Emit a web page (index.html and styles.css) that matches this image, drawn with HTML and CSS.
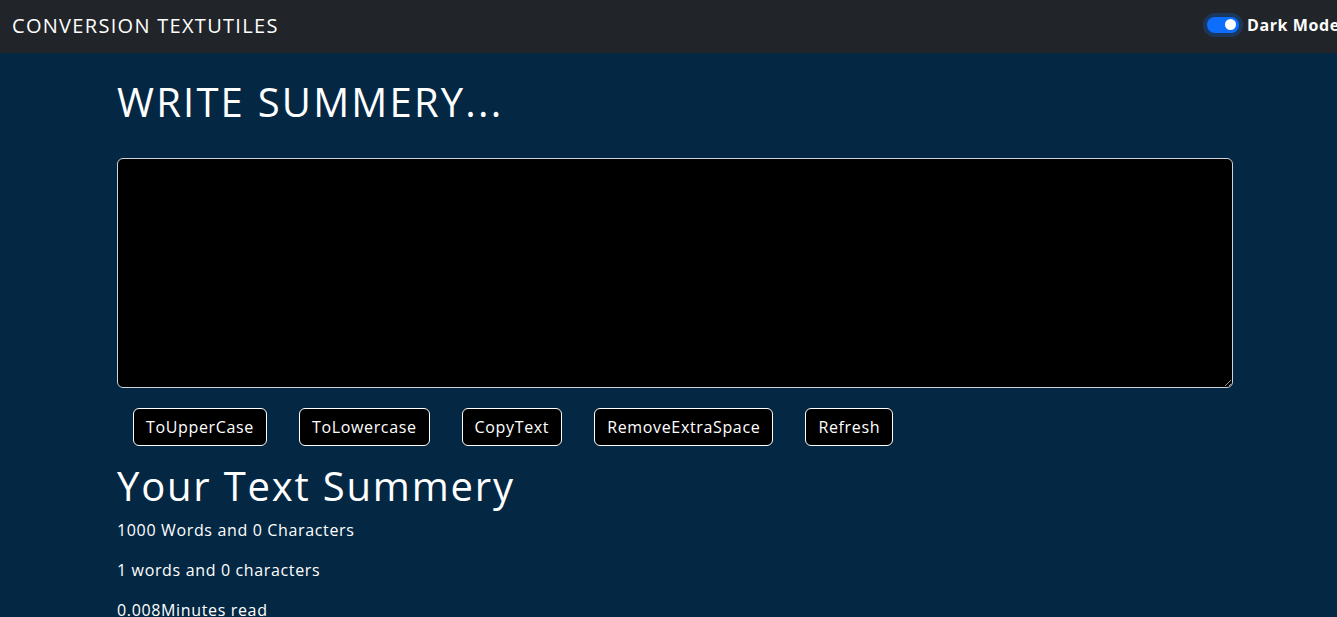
FILE: index.html
```html
<!DOCTYPE html>
<html lang="en">
<head>
<meta charset="utf-8">
<title>TextUtils</title>
<link rel="stylesheet" href="styles.css">
</head>
<body>
<nav class="navbar">
  <a class="brand" href="#">CONVERSION TEXTUTILES</a>
  <div class="switch">
    <span class="switch-track"><span class="switch-knob"></span></span>
    <label class="switch-label">Dark Mode</label>
  </div>
</nav>
<main class="container">
  <h1 class="title">WRITE SUMMERY...</h1>
  <textarea class="textbox" rows="8"></textarea>
  <div class="actions">
    <button class="btn">ToUpperCase</button>
    <button class="btn">ToLowercase</button>
    <button class="btn">CopyText</button>
    <button class="btn">RemoveExtraSpace</button>
    <button class="btn">Refresh</button>
  </div>
  <h1 class="summary-title">Your Text Summery</h1>
  <p class="stat">1000 Words and 0 Characters</p>
  <p class="stat">1 words and 0 characters</p>
  <p class="stat">0.008Minutes read</p>
</main>
</body>
</html>
```

FILE: styles.css
```css
* { box-sizing: border-box; }
html, body {
  margin: 0;
  padding: 0;
}
body {
  background: #042743;
  color: #fff;
  font-family: "Open Sans", "Noto Sans", sans-serif;
  font-size: 16px;
  line-height: 1.5;
  overflow: hidden;
}
.navbar {
  height: 53px;
  background: #212529;
  display: flex;
  align-items: center;
  justify-content: space-between;
  padding: 0 0 0 12px;
}
.brand {
  color: #fff;
  text-decoration: none;
  font-size: 20px;
  font-weight: 500;
  line-height: 30px;
  letter-spacing: 1.3px;
  margin-top: -2px;
}
.switch {
  display: flex;
  align-items: center;
  gap: 9px;
  width: 130px;
  margin-top: -4px;
}
.switch-track {
  flex: none;
  width: 32px;
  height: 16px;
  border-radius: 8px;
  background: #0d6efd;
  box-shadow: 0 0 0 4px rgba(13, 110, 253, 0.25);
  display: flex;
  align-items: center;
  justify-content: flex-end;
  padding-right: 3px;
}
.switch-knob {
  width: 11px;
  height: 11px;
  border-radius: 50%;
  background: #fff;
}
.switch-label {
  font-weight: 700;
  font-size: 16px;
  white-space: nowrap;
  letter-spacing: 0.6px;
  margin-left: -1px;
}
.container {
  width: 1116px;
  margin-left: 117px;
  display: flex;
  flex-direction: column;
  align-items: flex-start;
}
.title {
  font-size: 40px;
  font-weight: 400;
  line-height: 48px;
  margin: 25px 0 32px;
  letter-spacing: 2.2px;
}
.textbox {
  width: 100%;
  height: 230px;
  background: #000;
  color: #fff;
  border: 1px solid #ced4da;
  border-radius: 6px;
  padding: 6px 12px;
  font: inherit;
  resize: vertical;
}
.actions {
  display: flex;
  gap: 32px;
  margin: 20px 0 0 16px;
}
.btn {
  background: #000;
  color: #fff;
  border: 1px solid #fff;
  border-radius: 6px;
  font: inherit;
  font-size: 16px;
  font-weight: 500;
  height: 38px;
  padding: 0 12px;
  letter-spacing: 0.65px;
}
.summary-title {
  font-size: 40px;
  font-weight: 400;
  line-height: 48px;
  margin: 16px 0 8px;
  letter-spacing: 1.8px;
}
.stat {
  margin: 0 0 16px;
  font-size: 16px;
  font-weight: 500;
  line-height: 24px;
  letter-spacing: 0.65px;
}
```
